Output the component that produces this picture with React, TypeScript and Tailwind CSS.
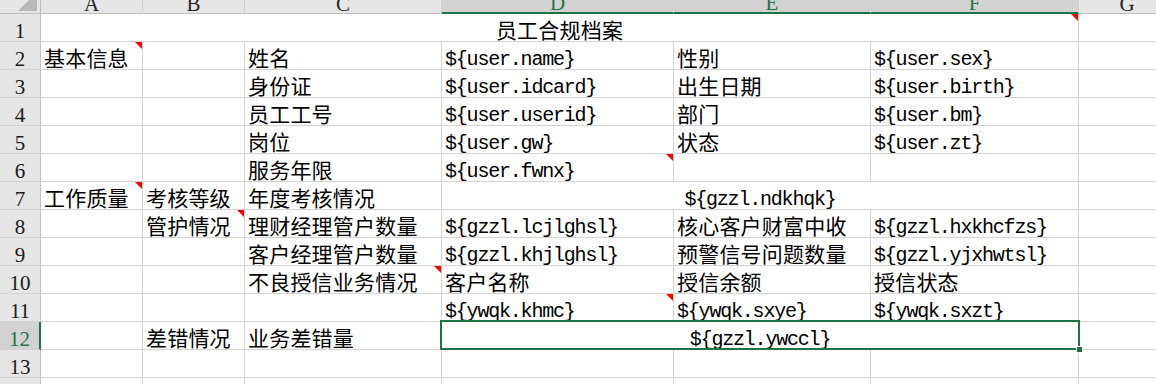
import React from "react";

type CellDef = {
  t?: string;
  span?: number;
  center?: boolean;
  mark?: boolean;
  sel?: boolean;
};

const cols = ["A", "B", "C", "D", "E", "F", "G"];

const rows: CellDef[][] = [
  [{ t: "员工合规档案", span: 6, center: true, mark: true }, {}],
  [{ t: "基本信息", mark: true }, {}, { t: "姓名" }, { t: "${user.name}" }, { t: "性别" }, { t: "${user.sex}" }, {}],
  [{}, {}, { t: "身份证" }, { t: "${user.idcard}" }, { t: "出生日期" }, { t: "${user.birth}" }, {}],
  [{}, {}, { t: "员工工号" }, { t: "${user.userid}" }, { t: "部门" }, { t: "${user.bm}" }, {}],
  [{}, {}, { t: "岗位" }, { t: "${user.gw}" }, { t: "状态" }, { t: "${user.zt}" }, {}],
  [{}, {}, { t: "服务年限" }, { t: "${user.fwnx}", mark: true }, {}, {}, {}],
  [{ t: "工作质量", mark: true }, { t: "考核等级" }, { t: "年度考核情况" }, { t: "${gzzl.ndkhqk}", span: 3, center: true }, {}],
  [{}, { t: "管护情况", mark: true }, { t: "理财经理管户数量" }, { t: "${gzzl.lcjlghsl}" }, { t: "核心客户财富中收" }, { t: "${gzzl.hxkhcfzs}" }, {}],
  [{}, {}, { t: "客户经理管户数量" }, { t: "${gzzl.khjlghsl}" }, { t: "预警信号问题数量" }, { t: "${gzzl.yjxhwtsl}" }, {}],
  [{}, {}, { t: "不良授信业务情况", mark: true }, { t: "客户名称" }, { t: "授信余额" }, { t: "授信状态" }, {}],
  [{}, {}, {}, { t: "${ywqk.khmc}", mark: true }, { t: "${ywqk.sxye}" }, { t: "${ywqk.sxzt}" }, {}],
  [{}, { t: "差错情况" }, { t: "业务差错量" }, { t: "${gzzl.ywccl}", span: 3, center: true, sel: true }, {}],
  [{}, {}, {}, {}, {}, {}, {}],
  [{}, {}, {}, {}, {}, {}, {}],
];

const Cell = ({ c }: { c: CellDef }) => {
  const latin = c.t?.startsWith("$");
  return (
    <div
      className={`relative flex items-end border-r border-b border-[#d4d4d4] bg-white text-black ${
        c.span === 6 ? "col-span-6" : c.span === 3 ? "col-span-3" : ""
      } ${c.center ? "justify-center" : "pl-[3px]"} ${c.sel ? "z-10" : ""}`}
    >
      {c.t && (
        <span
          className={
            latin
              ? "whitespace-nowrap font-['Liberation_Mono','Noto_Sans_CJK_SC',monospace] text-[20px] leading-[16px] tracking-[-1.2px] pb-[1px]"
              : "whitespace-nowrap font-['Noto_Sans_CJK_SC',sans-serif] text-[21px] leading-[24px] tracking-[0.2px]"
          }
        >
          {c.t}
        </span>
      )}
      {c.mark && (
        <div className="absolute top-0 right-0 h-0 w-0 border-t-[7px] border-l-[7px] border-t-[#ff0000] border-l-transparent" />
      )}
      {c.sel && (
        <div className="absolute left-[-2px] top-[-2px] right-[-2px] bottom-[-1px] border-2 border-[#217346]">
          <div className="absolute right-[-5px] bottom-[-5px] h-[7px] w-[7px] border border-white bg-[#217346]" />
        </div>
      )}
    </div>
  );
};

const App = () => {
  return (
    <div className="h-[384px] w-[1156px] overflow-hidden bg-white">
      <div className="grid w-[1176px] grid-cols-[41px_102px_102px_197px_232px_197px_208px_97px] grid-rows-[14px_repeat(14,28px)]">
        {/* corner */}
        <div className="relative border-r border-b border-[#bfbfbf] bg-[#e6e6e6]">
          <svg className="absolute left-0 top-0" width="40" height="13" viewBox="0 0 40 13">
            <polygon points="18,11 37,11 37,-8" fill="#b9b9b9" />
          </svg>
        </div>
        {cols.map((l, i) => {
          const on = i >= 3 && i <= 5;
          return (
            <div
              key={l}
              className={`flex items-end justify-center border-r border-r-[#d0d0d0] overflow-hidden ${
                on
                  ? "bg-[#d2d2d2] text-[#217346] border-b-2 border-b-[#217346]"
                  : "bg-[#e6e6e6] text-[#262626] border-b border-b-[#bfbfbf]"
              }`}
            >
              <span className="font-['Liberation_Serif',serif] text-[21px] leading-[16px] pb-[1px]">{l}</span>
            </div>
          );
        })}
        {rows.map((r, ri) => {
          const on = ri === 11;
          return (
            <React.Fragment key={ri}>
              <div
                className={`flex items-end justify-center border-b border-b-[#d0d0d0] ${
                  on
                    ? "bg-[#d2d2d2] text-[#217346] border-r-2 border-r-[#217346]"
                    : "bg-[#e6e6e6] text-[#1a1a1a] border-r border-r-[#bfbfbf]"
                }`}
              >
                <span className="font-['Liberation_Serif',serif] text-[21px] leading-[16px] pb-[2px]">{ri + 1}</span>
              </div>
              {r.map((c, ci) => (
                <Cell key={ci} c={c} />
              ))}
            </React.Fragment>
          );
        })}
      </div>
    </div>
  );
};

export default App;
